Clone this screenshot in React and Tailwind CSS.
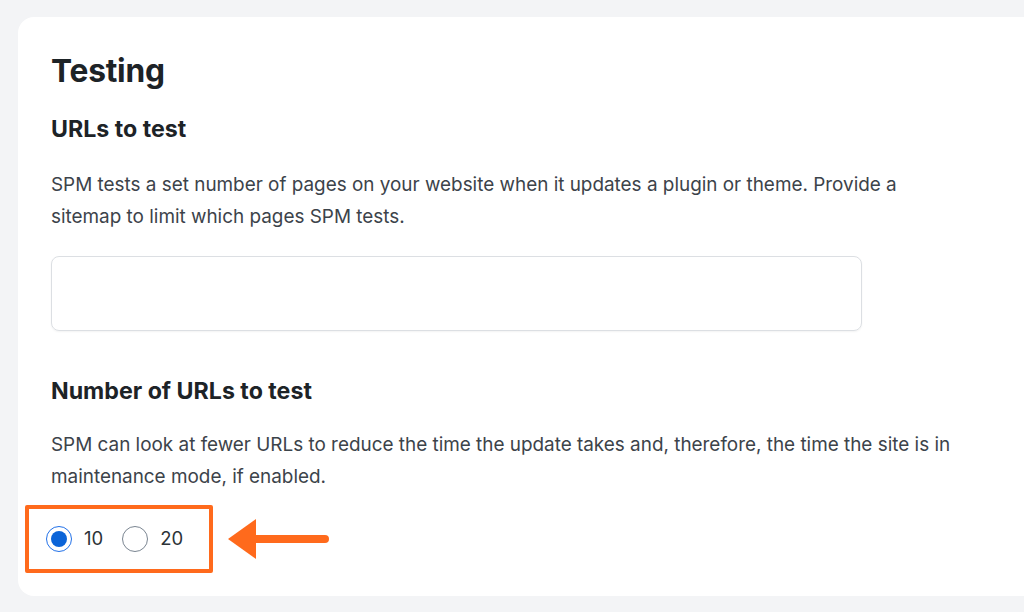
export default function App() {
  return (
    <div className="w-[1024px] h-[612px] overflow-hidden bg-[#f3f4f6] pt-[17px] pl-[18px]" style={{ fontFamily: "Inter, 'Noto Sans', sans-serif" }}>
      <div className="w-[1040px] h-[579px] bg-white rounded-[16px] pl-[33px] pt-[30px]">
        <h1 className="text-[31.7px] leading-[48px] font-bold text-[#1d2327] tracking-[-0.2px]">Testing</h1>
        <h2 className="mt-[19px] text-[23.2px] leading-[30px] font-bold text-[#1d2327]">URLs to test</h2>
        <p className="mt-[25px] text-[18.9px] leading-[32px] text-[#3c434a]">
          SPM tests a set number of pages on your website when it updates a plugin or theme. Provide a<br />
          sitemap to limit which pages SPM tests.
        </p>
        <div className="mt-[23px] w-[811px] h-[75px] rounded-[8px] border border-[#dcdfe3] shadow-[0_1px_2px_rgba(0,0,0,0.05)]" />
        <h2 className="mt-[45px] text-[23.2px] leading-[30px] font-bold text-[#1d2327]">Number of URLs to test</h2>
        <p className="mt-[23px] text-[18.9px] leading-[32px] text-[#3c434a]">
          SPM can look at fewer URLs to reduce the time the update takes and, therefore, the time the site is in<br />
          maintenance mode, if enabled.
        </p>
        <div className="mt-[12px] flex items-center">
          <div className="-ml-[26px] w-[188px] h-[68px] border-[4px] border-[#ff6a1c] rounded-[2px] flex items-center pl-[17px]">
            <label className="flex items-center gap-[12px]">
              <span className="w-[26px] h-[26px] rounded-full border-[1.5px] border-[#2271e8] flex items-center justify-center">
                <span className="w-[16px] h-[16px] rounded-full bg-[#0b64d8]" />
              </span>
              <span className="text-[18.5px] text-[#2c3338]">10</span>
            </label>
            <label className="flex items-center gap-[12px] ml-[19px]">
              <span className="w-[26px] h-[26px] rounded-full border-[1.5px] border-[#7a8591]" />
              <span className="text-[18.5px] text-[#2c3338]">20</span>
            </label>
          </div>
          <svg className="ml-[15px]" width="102" height="42" viewBox="0 0 102 42">
            <polygon points="0,21 28,1 28,41" fill="#ff6a1c" />
            <line x1="26" y1="21" x2="97" y2="21" stroke="#ff6a1c" strokeWidth="8" strokeLinecap="round" />
          </svg>
        </div>
      </div>
    </div>
  );
}
